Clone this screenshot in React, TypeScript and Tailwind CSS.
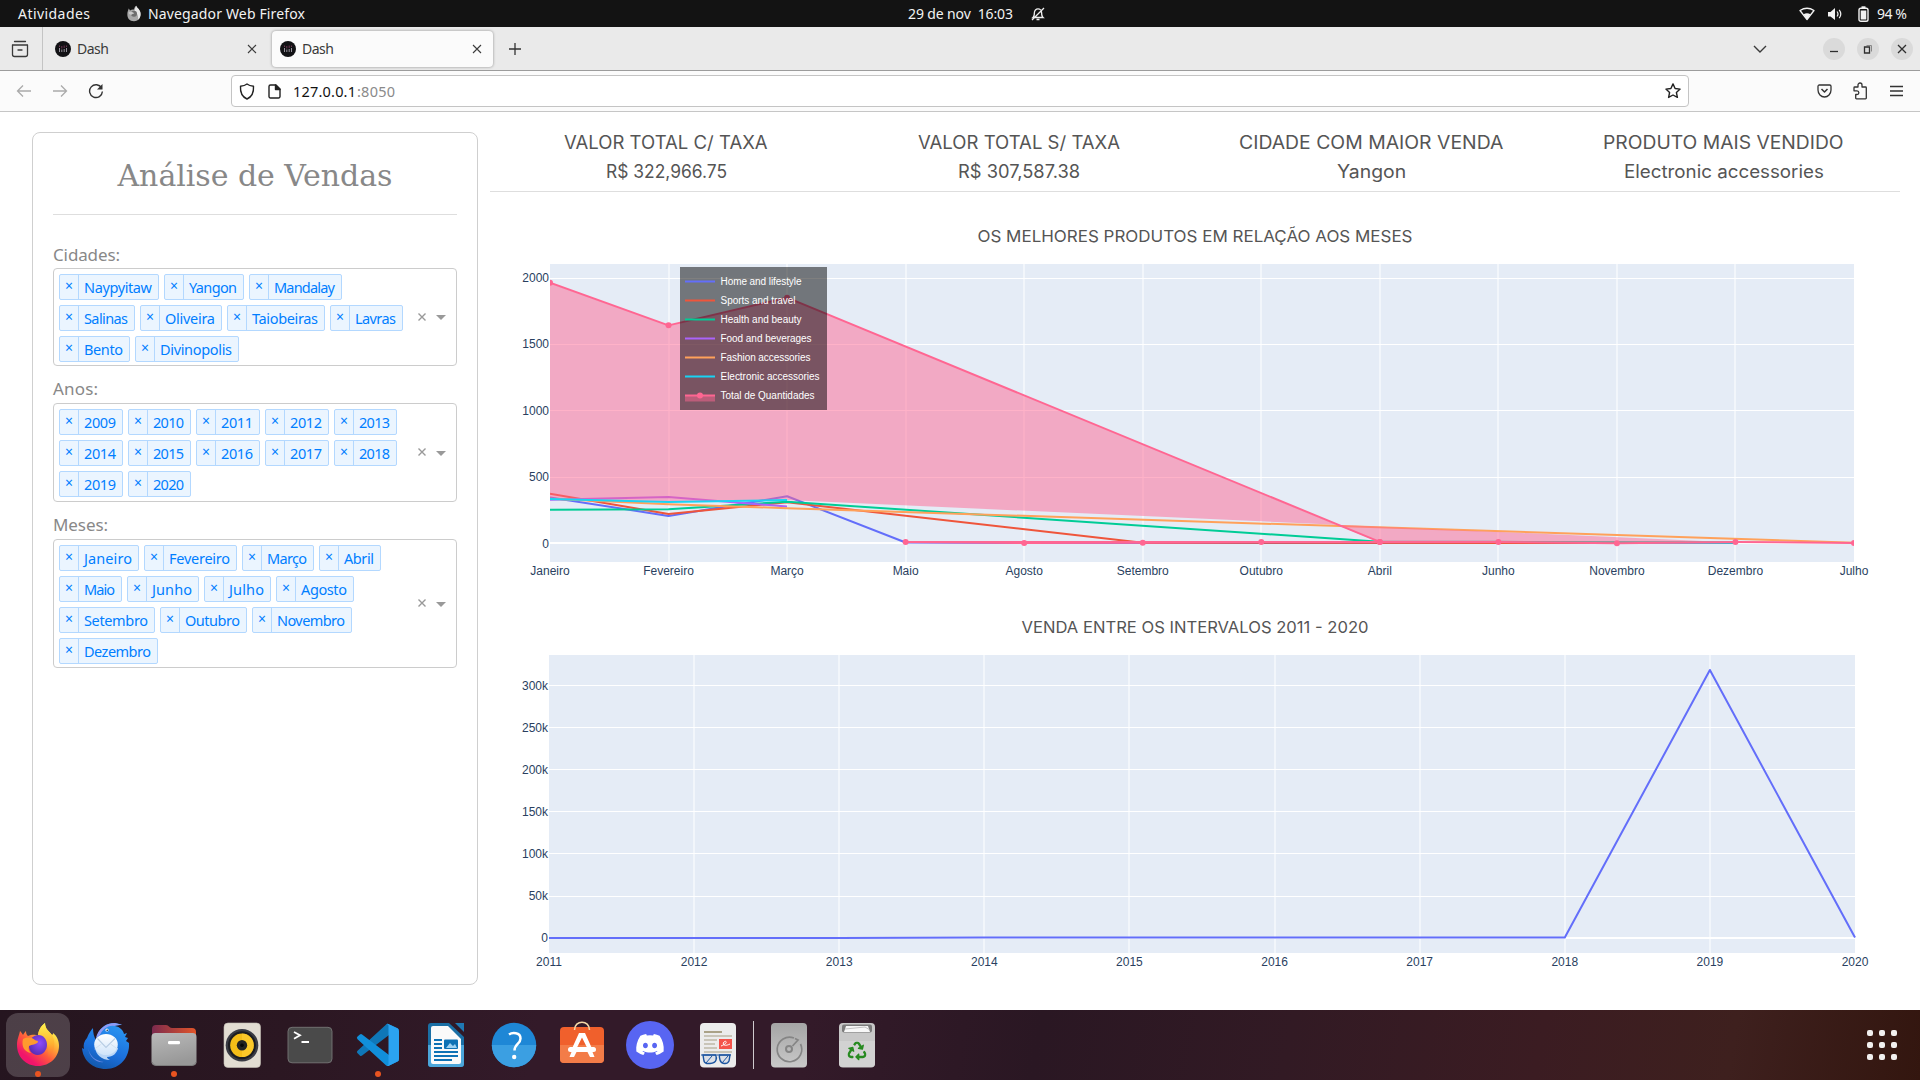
import { useLayoutEffect, useRef, useState } from "react";
import type { ReactNode } from "react";
import { FaDiscord, FaRecycle } from "react-icons/fa";

/* Text set to a known width by adjusting its tracking. */
function Fit({ w, children, className = "" }: { w: number; children: string; className?: string }) {
  const ref = useRef<HTMLSpanElement>(null);
  const [spacing, setSpacing] = useState(0);
  useLayoutEffect(() => {
    const el = ref.current;
    if (!el) return;
    el.style.letterSpacing = "0px";
    const natural = el.getBoundingClientRect().width;
    const next = (w - natural) / Math.max(1, children.length - 1);
    el.style.letterSpacing = `${next}px`;
    setSpacing(next);
  }, [w, children]);
  return (
    <span className={`inline-block shrink-0 whitespace-pre ${className}`} style={{ width: w }}>
      <span ref={ref} style={{ letterSpacing: spacing }}>
        {children}
      </span>
    </span>
  );
}

function Stretch({ w, children }: { w: number; children: string }) {
  const ref = useRef<HTMLSpanElement>(null);
  const [scale, setScale] = useState(1);
  useLayoutEffect(() => {
    if (ref.current) setScale(w / ref.current.offsetWidth);
  }, [w, children]);
  return (
    <span className="block whitespace-pre" style={{ width: w }}>
      <span ref={ref} className="inline-block origin-left" style={{ transform: `scaleX(${scale})` }}>
        {children}
      </span>
    </span>
  );
}

/* ---------- System bar ---------- */

function TopBar() {
  return (
    <div className="grid h-[27px] grid-cols-[908px_1fr_auto] items-center bg-[#131313] text-[14px] leading-none text-[#f2f2f2]">
      <div className="flex items-center pl-[18px]">
        <Fit w={72}>Atividades</Fit>
        <svg className="ml-[36px] h-[17px] w-[16px]" viewBox="0 0 48 48">
          <path d="M4 26c0-8 3-12 4-17 2 2 3 4 4 6 4-3 8-4 12-3 1-5 3-9 7-11 0 5 7 8 11 16 6 15-4 30-18 30S4 38 4 26z" fill="#a8a8a8" />
          <path d="M31 1c0 5 7 8 11 16 4 10 1 20-6 26 2-12-2-20-10-25 0-6 2-13 5-17z" fill="#e8e8e8" />
          <circle cx="24" cy="25" r="9" fill="#6d6d6d" />
          <path d="M8 20c4-2 9-2 12 0l5 3c-4 3-7 2-9 5-5-1-8-4-8-8z" fill="#c9c9c9" />
        </svg>
        <Fit w={157} className="ml-[6px]">Navegador Web Firefox</Fit>
      </div>
      <div className="flex items-center">
        <Fit w={105}>29 de nov  16:03</Fit>
        <svg className="ml-[17px] h-[16px] w-[16px]" viewBox="0 0 16 16" fill="none" stroke="#eee" strokeWidth="1.300">
          <path d="M3 11.500c1.300-1 1.400-3 1.400-5a3.600 3.600 0 0 1 7.200 0c0 2 .1 4 1.400 5zM6.500 13.500h3M2 14 14 2" />
        </svg>
      </div>
      <div className="flex items-center pr-[13px]">
        <svg className="h-[14px] w-[16px]" viewBox="0 0 16 14">
          <path d="M1 3.500Q8-1 15 3.500L8 12.500z" fill="none" stroke="#f2f2f2" strokeWidth="1.300" strokeLinejoin="round" />
          <path d="M4.500 7.200Q8 5.200 11.500 7.200L8 12.500z" fill="#f2f2f2" />
        </svg>
        <svg className="ml-[12px] h-[14px] w-[16px]" viewBox="0 0 16 14">
          <path d="M1 5h2.500L8 1v12L3.500 9.500H1z" fill="#f2f2f2" />
          <path d="M10 4.500q2 2.500 0 5M12.200 2.800q3.200 4.200 0 8.400" fill="none" stroke="#f2f2f2" strokeWidth="1.200" />
        </svg>
        <svg className="ml-[15px] h-[16px] w-[11px]" viewBox="0 0 11 16">
          <rect x="1" y="2.200" width="9" height="13" rx="1.800" fill="none" stroke="#f2f2f2" strokeWidth="1.400" />
          <rect x="3.500" y="0.300" width="4" height="1.800" fill="#f2f2f2" />
          <rect x="2.700" y="4.500" width="5.600" height="9" fill="#f2f2f2" />
        </svg>
        <Fit w={30} className="ml-[8px]">94 %</Fit>
      </div>
    </div>
  );
}

/* ---------- Browser chrome ---------- */

function Favicon() {
  return (
    <svg className="h-[16px] w-[16px] shrink-0" viewBox="0 0 16 16">
      <circle cx="8" cy="8" r="8" fill="#121215" />
      <path d="M4.500 7v4M6.800 8.500v2.500M9.200 8v3M11.500 7v4" stroke="#96929c" strokeWidth="1" />
      <path d="M4.500 4.500v1.500M6.800 5v2.500M9.200 4.500v2.500M11.500 4.500v1.500" stroke="#6b3450" strokeWidth="1" />
    </svg>
  );
}

function Cross({ className }: { className: string }) {
  return (
    <svg className={className} viewBox="0 0 10 10" stroke="#3c3c3c" strokeWidth="1.100">
      <path d="M1 1l8 8M9 1l-8 8" />
    </svg>
  );
}

function Tab({ active = false }: { active?: boolean }) {
  const look = active
    ? "flex h-[36px] w-[221px] items-center rounded-[4px] bg-[#fbfbfb] pr-[11px] pl-[8px] shadow-[0_0_3px_rgba(0,0,0,0.4)]"
    : "flex h-[36px] w-[222px] items-center pr-[15px] pl-[5px]";
  return (
    <div className={look}>
      <Favicon />
      <Fit w={32} className="ml-[6px] text-[14px] leading-none text-[#3a3a3a]">Dash</Fit>
      <Cross className="ml-auto h-[10px] w-[10px]" />
    </div>
  );
}

function WindowButton({ children }: { children: ReactNode }) {
  return (
    <div className="flex h-[22px] w-[22px] items-center justify-center rounded-full bg-[#dadada]">
      <svg className="h-[22px] w-[22px]" viewBox="0 0 22 22" fill="none" stroke="#2e2e2e" strokeWidth="1.300">
        {children}
      </svg>
    </div>
  );
}

function TabStrip() {
  return (
    <div className="flex h-[44px] items-center border-b border-[#9c9c9c] bg-[#eaeaea]">
      <div className="flex h-full w-[43px] items-center justify-center border-r border-[#c4c4c4] pr-[2px]">
        <svg className="h-[18px] w-[18px]" viewBox="0 0 18 18" fill="none" stroke="#3a3a3a" strokeWidth="1.300">
          <path d="M3.500 1.500h11M2 5h14" strokeLinecap="round" />
          <path d="M1.500 5v9.500a2 2 0 0 0 2 2h11a2 2 0 0 0 2-2V5M7 10h4" strokeLinecap="round" />
        </svg>
      </div>
      <div className="ml-[7px]">
        <Tab />
      </div>
      <Tab active />
      <svg className="ml-[16px] h-[12px] w-[12px]" viewBox="0 0 12 12" stroke="#333" strokeWidth="1.300">
        <path d="M6 0v12M0 6h12" />
      </svg>
      <div className="ml-auto flex items-center gap-[12px] pr-[7px]">
        <svg className="mr-[44px] h-[8px] w-[14px]" viewBox="0 0 14 8" fill="none" stroke="#3a3a3a" strokeWidth="1.400">
          <path d="M1 1l6 6 6-6" />
        </svg>
        <WindowButton>
          <path d="M7 13.500h8" />
        </WindowButton>
        <WindowButton>
          <path d="M7.500 9h5v6h-5z" />
          <path d="M9.500 7.500h5v6" stroke="#888" strokeWidth="1" />
        </WindowButton>
        <WindowButton>
          <path d="M7 7l8 8M15 7l-8 8" />
        </WindowButton>
      </div>
    </div>
  );
}

function NavBar() {
  return (
    <div className="flex h-[41px] items-center border-b border-[#c6c6c6] bg-[#fbfbfb]">
      <svg className="ml-[16px] h-[16px] w-[16px]" viewBox="0 0 16 16" fill="none" stroke="#aaa" strokeWidth="1.300">
        <path d="M15 8H1.500M7 2.500L1.500 8 7 13.500" />
      </svg>
      <svg className="ml-[20px] h-[16px] w-[16px]" viewBox="0 0 16 16" fill="none" stroke="#aaa" strokeWidth="1.300">
        <path d="M1 8h13.500M9 2.500L14.500 8 9 13.500" />
      </svg>
      <svg className="ml-[20px] h-[16px] w-[16px]" viewBox="0 0 16 16" fill="none" stroke="#333" strokeWidth="1.400">
        <path d="M13.600 5A6.400 6.400 0 1 0 14.400 8.500" />
        <path d="M14.500 1v5.500H9z" fill="#333" stroke="none" />
      </svg>
      <div className="ml-[127px] flex h-[32px] w-[1458px] items-center rounded-[4px] border border-[#c4c4c4] bg-white">
        <svg className="ml-[7px] h-[17px] w-[16px]" viewBox="0 0 16 17" fill="none" stroke="#222" strokeWidth="1.400" strokeLinejoin="round">
          <path d="M8 1c2 1.600 4 2 6.500 2.200.4 6-1.500 10.500-6.500 12.800-5-2.300-6.900-6.800-6.500-12.800C4 3 6 2.600 8 1z" />
        </svg>
        <svg className="ml-[13px] h-[15px] w-[13px]" viewBox="0 0 13 15" fill="none" stroke="#222" strokeWidth="1.400" strokeLinejoin="round">
          <path d="M1 2.500A1.500 1.500 0 0 1 2.500 1H8l4 4v7.500a1.500 1.500 0 0 1-1.500 1.500h-8A1.500 1.500 0 0 1 1 12.500z" />
          <path d="M7.500 1v4.500H12z" fill="#222" />
        </svg>
        <Fit w={63} className="ml-[12px] text-[14.500px] leading-none text-[#111]">127.0.0.1</Fit>
        <Fit w={38} className="ml-[1px] text-[14.500px] leading-none text-[#8a8a8a]">:8050</Fit>
        <svg className="mr-[7px] ml-auto h-[16px] w-[16px]" viewBox="0 0 16 16" fill="none" stroke="#222" strokeWidth="1.400" strokeLinejoin="round">
          <path d="M8 .9l2.100 4.600 5 .6-3.700 3.400 1 4.900L8 12l-4.400 2.400 1-4.900L.9 6.100l5-.6z" />
        </svg>
      </div>
      <div className="ml-auto flex items-center gap-[20px] pr-[17px]">
        <svg className="h-[14px] w-[15px]" viewBox="0 0 15 14" fill="none" stroke="#333" strokeWidth="1.300" strokeLinejoin="round">
          <path d="M2.300 1h10.400A1.300 1.300 0 0 1 14 2.300V6c0 4-3 7-6.500 7S1 10 1 6V2.300A1.300 1.300 0 0 1 2.300 1z" />
          <path d="M4.500 5l3 3 3-3" strokeWidth="1.500" />
        </svg>
        <svg className="mr-[2px] h-[18px] w-[16px]" viewBox="0 0 16 18" fill="none" stroke="#333" strokeWidth="1.300" strokeLinejoin="round">
          <path d="M6 5V3a2 2 0 0 1 4 0v2h3.500a.8.8 0 0 1 .8.800V16a.8.8 0 0 1-.8.800h-9a.8.8 0 0 1-.8-.8v-3.500h1.300a1.800 1.800 0 0 0 0-3.700H2V5.800A.8.800 0 0 1 2.800 5z" />
        </svg>
        <svg className="h-[12px] w-[13px]" viewBox="0 0 13 12" stroke="#333" strokeWidth="1.300">
          <path d="M0 1.500h13M0 6h13M0 10.500h13" />
        </svg>
      </div>
    </div>
  );
}

/* ---------- Filters ---------- */

type Option = [label: string, width: number];

function Select({ rows, className }: { rows: Option[][]; className: string }) {
  return (
    <div className={`flex rounded-[4px] border border-[#ccc] bg-white pt-[5px] pl-[5px] ${className}`}>
      <div className="flex flex-1 flex-col gap-[5px]">
        {rows.map((row, i) => (
          <div key={i} className="flex gap-[5px]">
            {row.map(([label, width]) => (
              <div
                key={label}
                className="flex h-[26px] shrink-0 items-stretch rounded-[2px] border border-[#b3d8ff] bg-[#ebf5ff] text-[14.500px] text-[#007eff]"
                style={{ width }}
              >
                <span className="flex w-[19px] items-center justify-center border-r border-[#b3d8ff] pb-[2px] text-[14px] leading-none">×</span>
                <Fit w={width - 32} className="ml-[5px] self-center leading-[22px]">{label}</Fit>
              </div>
            ))}
          </div>
        ))}
      </div>
      <div className="flex items-center gap-[10px] pr-[10px] pb-[6px]">
        <svg className="h-[8px] w-[8px]" viewBox="0 0 8 8" stroke="#999" strokeWidth="1.400">
          <path d="M.5 .5l7 7M7.500 .5l-7 7" />
        </svg>
        <svg className="mt-[2px] h-[5px] w-[10px]" viewBox="0 0 10 5">
          <path d="M0 0h10L5 5z" fill="#999" />
        </svg>
      </div>
    </div>
  );
}

const cities: Option[][] = [
  [["Naypyitaw", 100], ["Yangon", 80], ["Mandalay", 93]],
  [["Salinas", 76], ["Oliveira", 82], ["Taiobeiras", 98], ["Lavras", 73]],
  [["Bento", 71], ["Divinopolis", 104]],
];
const years: Option[][] = [
  [["2009", 64], ["2010", 63], ["2011", 64], ["2012", 64], ["2013", 63]],
  [["2014", 64], ["2015", 63], ["2016", 64], ["2017", 64], ["2018", 63]],
  [["2019", 64], ["2020", 63]],
];
const months: Option[][] = [
  [["Janeiro", 80], ["Fevereiro", 93], ["Março", 72], ["Abril", 62]],
  [["Maio", 63], ["Junho", 72], ["Julho", 67], ["Agosto", 78]],
  [["Setembro", 96], ["Outubro", 87], ["Novembro", 100]],
  [["Dezembro", 99]],
];

function Sidebar() {
  return (
    <aside className="mt-[20px] ml-[32px] h-[853px] w-[446px] shrink-0 rounded-[8px] border border-[#cfcfcf] px-[20px] text-[#888]">
      <h1 className="flex h-[82px] justify-center border-b border-[#dedede] pt-[23px] font-['DejaVu_Serif'] text-[30px] leading-[40px]">
        <Fit w={275}>Análise de Vendas</Fit>
      </h1>
      <div className="pt-[27px] text-[17px] leading-[26px]">
        <Fit w={67}>Cidades:</Fit>
      </div>
      <Select rows={cities} className="h-[98px]" />
      <div className="h-[37px] pt-[10px] text-[17px] leading-[26px]">
        <Fit w={45}>Anos:</Fit>
      </div>
      <Select rows={years} className="h-[99px]" />
      <div className="h-[37px] pt-[10px] text-[17px] leading-[26px]">
        <Fit w={55}>Meses:</Fit>
      </div>
      <Select rows={months} className="h-[129px]" />
    </aside>
  );
}

/* ---------- Indicators ---------- */

const kpis: [string, number, string, number][] = [
  ["VALOR TOTAL C/ TAXA", 204, "R$ 322,966.75", 121],
  ["VALOR TOTAL S/ TAXA", 202, "R$ 307,587.38", 122],
  ["CIDADE COM MAIOR VENDA", 264, "Yangon", 69],
  ["PRODUTO MAIS VENDIDO", 241, "Electronic accessories", 200],
];

function Indicators() {
  return (
    <div className="grid h-[80px] grid-cols-4 border-b border-[#dedede] pt-[16px] font-['Inter'] text-[18px] leading-[29px] text-[#555]">
      {kpis.map(([title, tw, value, vw]) => (
        <div key={title} className="flex flex-col items-center">
          <Stretch w={tw}>{title}</Stretch>
          <Stretch w={vw}>{value}</Stretch>
        </div>
      ))}
    </div>
  );
}

/* ---------- Charts ---------- */

const monthNames = ["Janeiro", "Fevereiro", "Março", "Maio", "Agosto", "Setembro", "Outubro", "Abril", "Junho", "Novembro", "Dezembro", "Julho"];
const mx = (i: number) => 550 + (i * 1304) / 11;
const my = (v: number) => 543 - v * 0.1323;
const pts = (d: [number, number][]) => d.map(([i, v]) => `${mx(i).toFixed(1)},${my(v).toFixed(1)}`).join(" ");

const series: { name: string; color: string; data: [number, number][] }[] = [
  { name: "Home and lifestyle", color: "#636efa", data: [[0, 345], [1, 205], [2, 353], [3, 4], [4, 0], [10, 2]] },
  { name: "Sports and travel", color: "#ef553b", data: [[0, 372], [1, 220], [2, 308], [5, 2], [9, 0]] },
  { name: "Health and beauty", color: "#00cc96", data: [[0, 252], [1, 255], [2, 312], [7, 9], [8, 9], [10, 4]] },
  { name: "Food and beverages", color: "#ab63fa", data: [[0, 327], [1, 347], [2, 276]] },
  { name: "Fashion accessories", color: "#ffa15a", data: [[0, 335], [1, 293], [2, 263], [11, 2]] },
  { name: "Electronic accessories", color: "#19d3f3", data: [[0, 332], [1, 310], [2, 324]] },
];
const total: [number, number][] = [[0, 1967], [1, 1645], [2, 1854], [7, 8], [3, 8], [4, 0], [5, 2], [6, 8], [7, 8], [8, 8], [9, -2], [10, 8], [11, 0]];
const legendWidths = [81, 75, 81, 91, 90, 99, 94];

function ProductsChart() {
  return (
    <svg className="block h-[390px] w-[1410px] font-['Liberation_Sans']" viewBox="490 192 1410 390">
      <defs>
        <clipPath id="plot-months">
          <rect x="550" y="264" width="1304" height="298" />
        </clipPath>
      </defs>
      <text x="1195" y="242" textAnchor="middle" textLength="435" lengthAdjust="spacingAndGlyphs" className="fill-[#555] font-['Inter'] text-[16.500px]">OS MELHORES PRODUTOS EM RELAÇÃO AOS MESES</text>
      <rect x="550" y="264" width="1304" height="298" fill="#e5ecf6" />
      {monthNames.slice(1, 11).map((m, i) => (
        <rect key={m} x={Math.round(mx(i + 1)) - 0.5} y="264" width="1" height="298" fill="#fff" />
      ))}
      {[278, 344, 410, 477].map((y) => (
        <rect key={y} x="550" y={y} width="1304" height="1" fill="#fff" />
      ))}
      <rect x="550" y="542" width="1304" height="2" fill="#fff" />
      <g clipPath="url(#plot-months)" fill="none" strokeWidth="2" strokeLinejoin="round">
        {series.slice(0, 5).map((s) => (
          <polyline key={s.name} points={pts(s.data)} stroke={s.color} />
        ))}
        <polygon points={pts([[0, 1964], [1, 1645], [2, 1854], [7, 4], [10, 4], [2, 324], [1, 310], [0, 332]])} fill="#ff6692" fillOpacity="0.5" />
        <polyline points={pts(series[5].data)} stroke={series[5].color} />
        <polyline points={pts(total)} stroke="#ff6692" />
        {total.map(([i, v], k) => (
          <circle key={k} cx={mx(i)} cy={my(v)} r="3" fill="#ff6692" />
        ))}
      </g>
      <g className="fill-[#2a3f5f] text-[12px]">
        {monthNames.map((m, i) => (
          <text key={m} x={mx(i)} y="575" textAnchor="middle">{m}</text>
        ))}
        {[["2000", 282], ["1500", 348], ["1000", 415], ["500", 481], ["0", 547.5]].map(([t, y]) => (
          <text key={t} x="549" y={y} textAnchor="end">{t}</text>
        ))}
      </g>
      <rect x="680" y="267" width="147" height="143" fill="#000" fillOpacity="0.5" />
      {[...series.map((s) => s.name), "Total de Quantidades"].map((name, i) => {
        const y = 281.5 + i * 19;
        const color = i < 6 ? series[i].color : "#ff6692";
        return (
          <g key={name}>
            {i === 6 && <rect x="685" y={y} width="30" height="6" fill="#ff6692" fillOpacity="0.5" />}
            <path d={`M685 ${y}h30`} stroke={color} strokeWidth="2" />
            {i === 6 && <circle cx="700" cy={y} r="3" fill={color} />}
            <text x="720.500" y={y + 3.5} textLength={legendWidths[i]} className="fill-white text-[10px]">{name}</text>
          </g>
        );
      })}
    </svg>
  );
}

const yx = (i: number) => 549 + (i * 1306) / 9;
const kTicks: [string, number][] = [["300k", 685], ["250k", 727], ["200k", 769], ["150k", 811], ["100k", 853], ["50k", 896]];

function YearsChart() {
  return (
    <svg className="block h-[428px] w-[1410px] font-['Liberation_Sans']" viewBox="490 582 1410 428">
      <text x="1195" y="632.500" textAnchor="middle" textLength="347" lengthAdjust="spacingAndGlyphs" className="fill-[#555] font-['Inter'] text-[16.500px]">VENDA ENTRE OS INTERVALOS 2011 - 2020</text>
      <rect x="549" y="655" width="1306" height="298" fill="#e5ecf6" />
      {[1, 2, 3, 4, 5, 6, 7, 8].map((i) => (
        <rect key={i} x={Math.round(yx(i)) - 0.5} y="655" width="1" height="298" fill="#fff" />
      ))}
      {kTicks.map(([t, y]) => (
        <rect key={t} x="549" y={y} width="1306" height="1" fill="#fff" />
      ))}
      <rect x="549" y="937" width="1306" height="2" fill="#fff" />
      <polyline
        points={`549,938 ${yx(2)},938 ${yx(3)},937.600 ${yx(7)},937.600 ${yx(8)},670 1855,937.500`}
        fill="none"
        stroke="#636efa"
        strokeWidth="2"
        strokeLinejoin="round"
      />
      <g className="fill-[#2a3f5f] text-[12px]">
        {Array.from({ length: 10 }, (_, i) => (
          <text key={i} x={yx(i)} y="966" textAnchor="middle">{2011 + i}</text>
        ))}
        {kTicks.map(([t, y]) => (
          <text key={t} x="548" y={t === "50k" ? y + 4 : y + 5} textAnchor="end">{t}</text>
        ))}
        <text x="548" y="942" textAnchor="end">0</text>
      </g>
    </svg>
  );
}

/* ---------- Dock ---------- */

function FirefoxIcon() {
  return (
    <>
      <defs>
        <linearGradient id="ff-a" x1="0.850" y1="0.100" x2="0.200" y2="0.900">
          <stop offset="0.050" stopColor="#fff44f" />
          <stop offset="0.350" stopColor="#ffa436" />
          <stop offset="0.600" stopColor="#ff5a3c" />
          <stop offset="0.900" stopColor="#f0156b" />
        </linearGradient>
        <linearGradient id="ff-b" x1="0.500" y1="0" x2="0.500" y2="1">
          <stop offset="0" stopColor="#fff44f" />
          <stop offset="0.600" stopColor="#ffb030" />
          <stop offset="1" stopColor="#ff6a2e" stopOpacity="0.200" />
        </linearGradient>
        <radialGradient id="ff-c" cx="0.600" cy="0.400" r="0.600">
          <stop offset="0" stopColor="#8f4bff" />
          <stop offset="1" stopColor="#5b2fb8" />
        </radialGradient>
      </defs>
      <path d="M3 24c0-6 2-9 3-14 1 1 2 2 3 4 1-2 2-3 3-4 0 3 1 4 2 5 3-1 7-2 10 0 0-5 3-10 7-13 0 6 4 8 7 12 1-1 1-1 1-2 4 3 6 8 6 13 0 11-9 20-21 20S3 36 3 24z" fill="url(#ff-a)" />
      <path d="M24 15c0-5 3-10 7-13 0 6 4 8 7 12 4 7 3 17-4 23 1-9 0-18-10-22z" fill="url(#ff-b)" />
      <path d="M15 22a9.500 9.500 0 0 1 9-8c6 0 9 5 9 10s-4 10-9.500 10S14 29 15 22z" fill="url(#ff-c)" />
      <path d="M9 18c4-2 8-2 12 1 1 1 3 0 3 2-2 3-6 2-9 4-1 3 0 5 2 7-6-1-10-6-8-14z" fill="#ff9a2e" />
    </>
  );
}

function ThunderbirdIcon() {
  return (
    <>
      <defs>
        <linearGradient id="tb-a" x1="0.700" y1="0" x2="0.300" y2="1">
          <stop offset="0" stopColor="#2b97f2" />
          <stop offset="0.600" stopColor="#1b6fdc" />
          <stop offset="1" stopColor="#1257a8" />
        </linearGradient>
        <linearGradient id="tb-b" x1="0" y1="0" x2="0" y2="1">
          <stop offset="0" stopColor="#ffffff" />
          <stop offset="1" stopColor="#cfe4fa" />
        </linearGradient>
      </defs>
      <path d="M5 17c2-5 4-8 6-10 0 5 1 9 3 12 1-8 7-17 18-17 3 0 6 1 8 2-3 0-5 0-7 1 5 1 8 4 9 8l3-1-2 4 3 1-2 3 3 2c1 14-9 26-23 26C10 48 1 39 0 27l2 1c-1-4 0-8 3-11z" fill="url(#tb-a)" />
      <path d="M14 17C16 8 24 2 33 2l7 2c-3 0-6 0-8 1-6-1-12 4-14 9z" fill="#8f9bf5" />
      <path d="M6 26c1 8 7 14 16 15-7 1-15-4-16-15z" fill="#8f9bf5" opacity="0.700" />
      <path d="M13 27c1 6 6 12 15 12-2-1-3-2-3-3 6 0 10-4 11-9z" fill="#b9d6f7" />
      <ellipse cx="24" cy="23.500" rx="11.800" ry="10.500" fill="url(#tb-b)" />
      <path d="M15.500 17.500l8.500 9 9-9" fill="none" stroke="#b7cde4" strokeWidth="1.100" />
      <path d="M12.500 28l7-5M35.500 28l-7-5" stroke="#cddcec" strokeWidth="0.800" />
      <circle cx="25" cy="9" r="1.600" fill="#fff" />
      <circle cx="25.200" cy="9.200" r="0.800" fill="#123" />
    </>
  );
}

function FilesIcon() {
  return (
    <>
      <defs>
        <linearGradient id="fl-a" x1="0" x2="1">
          <stop offset="0" stopColor="#7b2a4e" />
          <stop offset="1" stopColor="#e2552a" />
        </linearGradient>
        <linearGradient id="fl-b" x1="0" y1="0" x2="0.300" y2="1">
          <stop offset="0" stopColor="#b9b9b9" />
          <stop offset="1" stopColor="#989898" />
        </linearGradient>
      </defs>
      <path d="M2 8a4 4 0 0 1 4-4h10c3 0 3 3 6 3h20a4 4 0 0 1 4 4v10H2z" fill="url(#fl-a)" />
      <rect x="1.500" y="12" width="45" height="32.500" rx="4" fill="url(#fl-b)" />
      <path d="M2 41q1 3.500 4 3.500h36q3 0 4-3.500" fill="none" stroke="#7d7d7d" strokeWidth="1" />
      <rect x="18" y="20" width="12" height="3.200" rx="1.300" fill="#fff" />
    </>
  );
}

function RhythmboxIcon() {
  return (
    <>
      <rect x="6" y="2" width="36.500" height="44.500" rx="4" fill="#e2ddd2" stroke="#c5c0b5" strokeWidth="0.600" />
      <circle cx="24" cy="24.300" r="16.300" fill="#3a3c44" />
      <circle cx="24" cy="24.300" r="14" fill="#1c1d21" />
      <circle cx="24" cy="24.300" r="11.800" fill="#f4bd18" />
      <path d="M24 12.500a11.800 11.800 0 0 1 0 23.600z" fill="#ffce35" opacity="0.600" />
      <circle cx="24" cy="24.300" r="5.200" fill="#222" />
      <circle cx="24" cy="24.300" r="1.800" fill="#070707" />
    </>
  );
}

function TerminalIcon() {
  return (
    <>
      <rect x="2" y="6.300" width="44" height="35.500" rx="4" fill="#4a4a4a" stroke="#777" strokeWidth="0.900" />
      <path d="M8 11l6 3.200L8 17.700M15.500 21h7.500" fill="none" stroke="#fff" strokeWidth="1.800" />
    </>
  );
}

function CodeIcon() {
  return (
    <g transform="translate(3 2.800) scale(0.420 0.423)">
      <path fill="#0f77b8" d="M96.461 10.796L75.857.876a6.230 6.230 0 0 0-7.107 1.207L1.299 63.583a4.167 4.167 0 0 0 .004 6.162l5.510 5.009a4.167 4.167 0 0 0 5.321.237l81.227-61.621C96.086 11.303 100 13.246 100 16.667v-.24a6.250 6.250 0 0 0-3.539-5.631z" />
      <path fill="#118fda" d="M96.461 89.204l-20.604 9.921a6.230 6.230 0 0 1-7.107-1.208L1.299 36.417a4.167 4.167 0 0 1 .004-6.162l5.510-5.009a4.167 4.167 0 0 1 5.321-.237l81.227 61.621C96.086 88.697 100 86.754 100 83.333v.240a6.250 6.250 0 0 1-3.539 5.631z" />
      <path fill="#2ba3f1" d="M75.858 99.126a6.230 6.230 0 0 1-7.108-1.209c2.306 2.306 6.250.672 6.250-2.589V4.672c0-3.262-3.944-4.895-6.250-2.589A6.230 6.230 0 0 1 75.858.874l20.601 9.907A6.250 6.250 0 0 1 100 16.413v67.174a6.250 6.250 0 0 1-3.541 5.633z" />
    </g>
  );
}

function WriterIcon() {
  return (
    <>
      <path d="M9 2h18l15 14v27a3 3 0 0 1-3 3H9a3 3 0 0 1-3-3V5a3 3 0 0 1 3-3z" fill="#1a6fa5" />
      <path d="M6 24h36v19a3 3 0 0 1-3 3H9a3 3 0 0 1-3-3z" fill="#4ba6da" />
      <path d="M11 5h15l13 13v23a2 2 0 0 1-2 2H11a2 2 0 0 1-2-2V7a2 2 0 0 1 2-2z" fill="#fafafa" />
      <path d="M33 2h9v9z" fill="#1f79b3" />
      <path d="M12 19h8M12 23h8M12 27h8M12 31h24M12 35h24M12 39h18" stroke="#0e72b5" strokeWidth="1.800" />
      <rect x="22" y="18.500" width="14" height="9.500" rx="1" fill="#0e72b5" />
      <path d="M24 27l4-5 3 3 2-2 2 4z" fill="#9fd2f2" />
    </>
  );
}

function HelpIcon() {
  return (
    <>
      <circle cx="24" cy="24" r="22.200" fill="#1e87d6" />
      <path d="M1.800 24a22.200 22.200 0 0 0 44.400 0z" fill="#3b9fe2" />
      <path d="M19 13.500c3-2 11.500-2.500 11.500 4 0 5.500-6 5.500-6 12" fill="none" stroke="#fff" strokeWidth="2.500" />
      <circle cx="24.200" cy="36" r="2.200" fill="#fff" />
    </>
  );
}

function StoreIcon() {
  return (
    <>
      <rect x="2" y="6" width="44" height="36" rx="4" fill="#f0602c" />
      <path d="M2 24h44v14a4 4 0 0 1-4 4H6a4 4 0 0 1-4-4z" fill="#f37c48" />
      <path d="M16.500 9C16.500-1.500 31.500-1.500 31.500 9" fill="none" stroke="#f5d9a8" strokeWidth="1.500" />
      <path d="M21 12h6l7 15.500h-4.500L24 16.500l-5.500 11H14zM13.500 31h5l-2.500 5h-4.500zM29.500 31h5l2 5H32z" fill="#fff" />
      <rect x="10" y="26" width="28" height="5" rx="2.500" fill="#fff" />
    </>
  );
}

function DiscordIcon() {
  return (
    <>
      <circle cx="24" cy="24" r="24" fill="#5865f2" />
      <g transform="translate(9 8.500)">
        <FaDiscord size={30} color="#fff" />
      </g>
    </>
  );
}

function ReaderIcon() {
  return (
    <>
      <rect x="6" y="2" width="36" height="44.500" rx="4" fill="#ececec" />
      <path d="M10 11h18" stroke="#a39a7c" strokeWidth="1.800" />
      <path d="M10 15h28M10 19h13M10 23h11M10 27h13M10 31h28" stroke="#c9c5b8" strokeWidth="1.800" />
      <rect x="25" y="18" width="13" height="10" fill="#f4534b" />
      <path d="M27 25c8-3 5-6 3-4s0 5 6 2" fill="none" stroke="#fff" strokeWidth="1" />
      <path d="M9 34h12.500q1.500 2.500.5 5c-1 4-11 5-12 1zM25.500 34H36l-1 6c-2 4-8 3-9-1q-1-3-.5-5z" fill="#d5dce6" fillOpacity="0.700" stroke="#1c55a0" strokeWidth="1.400" />
      <path d="M7 34h30M12 42l6-7M28 42l6-7" stroke="#1c55a0" strokeWidth="1" />
    </>
  );
}

function DiskIcon() {
  return (
    <>
      <defs>
        <linearGradient id="dk-a" x1="0" y1="0" x2="0" y2="1">
          <stop offset="0" stopColor="#a5a5a5" />
          <stop offset="1" stopColor="#c9c9c9" />
        </linearGradient>
      </defs>
      <rect x="6" y="2" width="36" height="44.500" rx="4" fill="url(#dk-a)" />
      <path d="M35.500 23A12.300 12.300 0 1 1 29 17M27.500 25l5.500-6-3-1.500" fill="none" stroke="#858585" strokeWidth="1.700" />
      <circle cx="24" cy="28" r="3" fill="none" stroke="#858585" strokeWidth="2" />
    </>
  );
}

function TrashIcon() {
  return (
    <>
      <rect x="6" y="2" width="36" height="44.500" rx="4" fill="#c8c8c8" />
      <path d="M6 20h36v22a4 4 0 0 1-4 4H10a4 4 0 0 1-4-4z" fill="#d2d2d2" />
      <rect x="9" y="3.500" width="30" height="8" rx="2" fill="#7b7b7b" />
      <path d="M11 11l2-6h22l2 6z" fill="#f8f8f8" />
      <path d="M12 8l20-2 5 3" fill="none" stroke="#aaa" strokeWidth="0.700" />
      <g transform="translate(14.500 20.500)">
        <FaRecycle size={19} color="#278a20" />
      </g>
    </>
  );
}

function DockItem({ children, active = false, running = false }: { children: ReactNode; active?: boolean; running?: boolean }) {
  return (
    <div className={active ? "relative flex h-[64px] w-[64px] items-center justify-center rounded-[12px] bg-white/18" : "relative flex h-[64px] w-[64px] items-center justify-center"}>
      <svg className="h-[48px] w-[48px] overflow-visible" viewBox="0 0 48 48">
        {children}
      </svg>
      {running && <span className="absolute bottom-0 left-[29px] h-[6px] w-[6px] rounded-full bg-[#e95420]" />}
    </div>
  );
}

function Dock() {
  return (
    <div className="flex h-[70px] items-center gap-[4px] bg-[linear-gradient(100deg,#25151f_0%,#2b1722_15%,#331a29_28%,#331a29_42%,#2a1723_54%,#321a24_67%,#3b1c22_80%,#3e201e_90%,#33160f_100%)] pl-[6px]">
      <DockItem active running><FirefoxIcon /></DockItem>
      <DockItem><ThunderbirdIcon /></DockItem>
      <DockItem running><FilesIcon /></DockItem>
      <DockItem><RhythmboxIcon /></DockItem>
      <DockItem><TerminalIcon /></DockItem>
      <DockItem running><CodeIcon /></DockItem>
      <DockItem><WriterIcon /></DockItem>
      <DockItem><HelpIcon /></DockItem>
      <DockItem><StoreIcon /></DockItem>
      <DockItem><DiscordIcon /></DockItem>
      <DockItem><ReaderIcon /></DockItem>
      <div className="mx-[-1px] h-[48px] w-px bg-[#cfcacd]" />
      <DockItem><DiskIcon /></DockItem>
      <DockItem><TrashIcon /></DockItem>
      <div className="mr-[23px] ml-auto grid grid-cols-3 gap-[6px]">
        {Array.from({ length: 9 }, (_, i) => (
          <span key={i} className="h-[6px] w-[6px] rounded-[2px] bg-[#f2f0ef]" />
        ))}
      </div>
    </div>
  );
}

export default function App() {
  return (
    <div className="flex h-[1080px] w-[1920px] flex-col overflow-hidden bg-white font-['Noto_Sans',sans-serif]">
      <TopBar />
      <TabStrip />
      <NavBar />
      <div className="flex h-[898px]">
        <Sidebar />
        <main className="ml-[12px] flex w-[1410px] flex-col">
          <Indicators />
          <ProductsChart />
          <YearsChart />
        </main>
      </div>
      <Dock />
    </div>
  );
}
